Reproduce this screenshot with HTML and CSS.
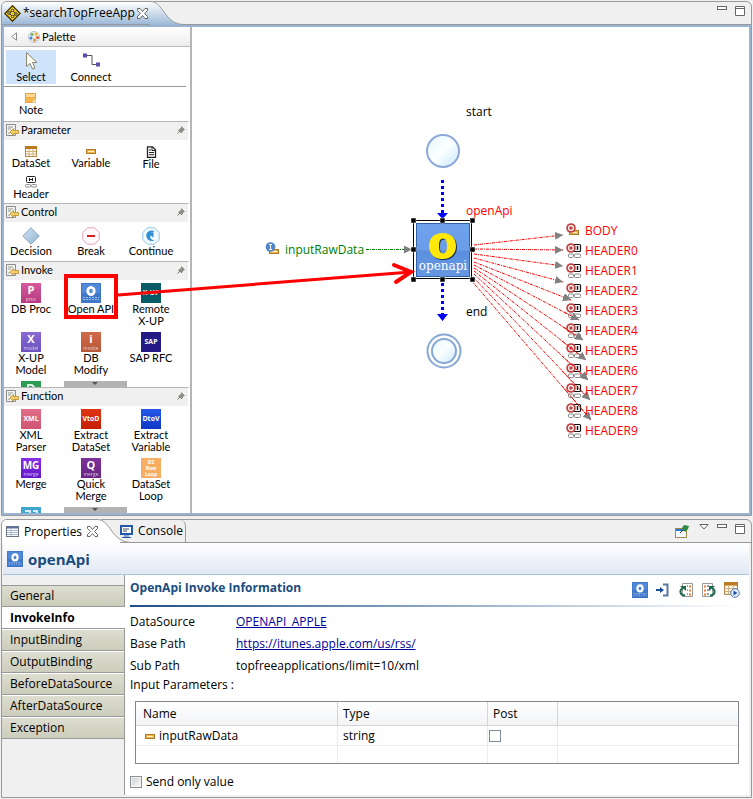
FILE: index.html
```html
<!DOCTYPE html>
<html lang="en">
<head>
<meta charset="utf-8">
<title>searchTopFreeApp</title>
<link rel="stylesheet" href="styles.css">
</head>
<body>
<svg class="defs" aria-hidden="true">
  <defs>
    <linearGradient id="gBlue" x1="0" y1="0" x2="0" y2="1"><stop offset="0" stop-color="#6fa3ee"/><stop offset=".5" stop-color="#6a9ce8"/><stop offset=".52" stop-color="#5b8fde"/><stop offset="1" stop-color="#6697e2"/></linearGradient>
    <linearGradient id="gCircle" x1="0" y1="0" x2="1" y2="1"><stop offset="0" stop-color="#e6f7fd"/><stop offset=".5" stop-color="#fbffff"/><stop offset="1" stop-color="#c9e6fb"/></linearGradient>
    <linearGradient id="gTab" x1="0" y1="0" x2="0" y2="1"><stop offset="0" stop-color="#fff"/><stop offset="1" stop-color="#9db9d8"/></linearGradient>
    <linearGradient id="gDiamond" x1="0" y1="0" x2="1" y2="1"><stop offset="0" stop-color="#d3e4f2"/><stop offset="1" stop-color="#8fb3d3"/></linearGradient>
    <marker id="head" viewBox="0 0 8 8" markerWidth="8" markerHeight="8" refX="8" refY="4" orient="auto" markerUnits="userSpaceOnUse"><path d="M0 0L8 4L0 8z" fill="#808080"/></marker>
    <symbol id="i-api" viewBox="0 0 20 20"><rect width="20" height="20" fill="#3f78c8"/><rect x="1" y="1" width="18" height="9" fill="#4f89d8"/><ellipse cx="10" cy="8" rx="3.200" ry="3.700" fill="none" stroke="#fff" stroke-width="2.800"/><path d="M2 14.500h16M2 16.500h16" stroke="#9fc0ee" stroke-dasharray="2 1"/></symbol>
    <symbol id="i-drawer" viewBox="0 0 13 12"><path d="M.5 .5h9v11h-9z" fill="#f3f3ee" stroke="#8c8c8c"/><path d="M2 3h5M2 5h3M2 9h2" stroke="#999"/><path d="M4 8l3.500-3.500v2h5v3h-5v2z" fill="#f6cf68" stroke="#b98a24" stroke-width=".8"/></symbol>
    <symbol id="i-pin" viewBox="0 0 8 8"><path d="M4.500 .5l3 3-1 .5-1.500 2-.5 1-3-3 1-.5 2-1.500z" fill="#8d8d85" stroke="#77776f" stroke-width=".6"/><path d="M3 5L.5 7.500" stroke="#777"/></symbol>
    <symbol id="i-close" viewBox="0 0 11 11"><path d="M.5 .5h2.500l2.500 3 2.500-3h2.500v2l-3 3 3 3v2h-2.500l-2.500-3-2.500 3h-2.500v-2l3-3-3-3z" fill="#fff" stroke="#555" stroke-width=".9"/></symbol>
    <symbol id="i-var" viewBox="0 0 10 5"><rect x=".5" y=".5" width="9" height="4" fill="#e9b44e" stroke="#b07a22"/><path d="M2 2.500h6" stroke="#fff1c4"/></symbol>
    <symbol id="i-grid" viewBox="0 0 12 11"><rect x=".5" y=".5" width="11" height="10" fill="#fffdf3" stroke="#b08a4c"/><rect x="0" y="0" width="12" height="3" fill="#bb7a1e"/><path d="M1 5.500h10M1 8h10M4 3v7M8 3v7" stroke="#cdb27e"/></symbol>
    <symbol id="i-hdr" viewBox="0 0 12 12"><rect x="1.500" y=".5" width="9" height="6" rx="1" fill="#fff" stroke="#222"/><path d="M4.500 2v3M7.500 2v3M4 3.500h4" stroke="#222"/><rect x=".5" y="8.500" width="5" height="2.500" rx="1" fill="#fff" stroke="#888"/><rect x="6.500" y="8.500" width="5" height="2.500" rx="1" fill="#fff" stroke="#888"/></symbol>
    <symbol id="i-target" viewBox="0 0 10 10"><circle cx="5" cy="5" r="4.800" fill="#bf4444"/><circle cx="5" cy="5" r="2.400" fill="none" stroke="#fff" stroke-width="1.200"/></symbol>
    <symbol id="i-outhdr" viewBox="0 0 16 16"><rect x="7.500" y="1.500" width="7" height="7" rx="1" fill="#fff" stroke="#111" stroke-width="1.200"/><path d="M11.500 3v4" stroke="#111" stroke-width="1.500"/><rect x="2.500" y="11" width="5" height="3.500" rx="1" fill="#fff" stroke="#888"/><rect x="8.500" y="11" width="6" height="3.500" rx="1" fill="#fff" stroke="#888"/><use href="#i-target" width="10" height="10" x="0" y="0"/></symbol>
  </defs>
</svg>

<main class="workbench">
<section class="pane editor">
  <header class="tabbar">
    <div class="tab tab-editor">
      <svg width="17" height="17" viewBox="0 0 17 17"><path d="M8.500 .8l7.700 7.700-7.700 7.700L.8 8.500z" fill="#ffd21f" stroke="#3d3000" stroke-width="1.300"/><path d="M5 8l3.500-2.500L12 9l-3.500 2.500z" fill="none" stroke="#222"/><g fill="#ffe98a" stroke="#222" stroke-width=".9"><circle cx="5" cy="8" r="1.300"/><circle cx="8.500" cy="5.500" r="1.300"/><circle cx="12" cy="9" r="1.300"/><circle cx="8.500" cy="11.500" r="1.300"/></g></svg>
      <span>*searchTopFreeApp</span>
      <svg width="11" height="11"><use href="#i-close"/></svg>
    </div>
    <svg class="swoop" width="34" height="24" viewBox="0 0 34 24"><path d="M0 0C14 0 14 23.500 34 23.500L34 24H0z" fill="url(#gTab)"/><path d="M0 .5C14 .5 14 23.500 34 23.500" fill="none" stroke="#999"/></svg>
    <div class="wincontrols">
      <svg width="10" height="4"><rect x=".5" y=".5" width="9" height="3" fill="#fff" stroke="#666"/></svg>
      <svg width="10" height="10"><path d="M.5 .5h9v9h-9zM0 2.500h10" fill="#fff" stroke="#666"/></svg>
    </div>
  </header>

  <div class="editor-body">
    <aside class="palette">
      <h2 class="palette-title">
        <svg width="6" height="9" viewBox="0 0 6 9"><path d="M5.500 .8v7.400L.8 4.500z" fill="#fff" stroke="#888"/></svg>
        <svg width="12" height="12" viewBox="0 0 12 12"><circle cx="6" cy="6" r="5.500" fill="#e8eef5" stroke="#b9c3cf"/><circle cx="4" cy="3.500" r="1.500" fill="#6bb34a"/><circle cx="8" cy="3" r="1.500" fill="#f2b52b"/><circle cx="9.500" cy="6.500" r="1.500" fill="#e4572e"/><circle cx="3" cy="7" r="1.500" fill="#3b82d0"/><circle cx="6.500" cy="9" r="1.600" fill="#f0912c"/></svg>
        Palette
      </h2>
      <div class="tools tools-main">
        <button class="tool selected"><svg width="20" height="20" viewBox="0 0 20 20"><path d="M5.500 1.500v14l3.500-3 2.500 5.500 2.500-1-2.500-5.500h4.500z" fill="#fffdf0" stroke="#8a8570"/></svg><span>Select</span></button>
        <button class="tool"><svg width="20" height="20" viewBox="0 0 20 20"><path d="M4 4.500h7v9h6" fill="none" stroke="#555"/><path d="M2 2.500h4v4H2zM15 11.500h4v4h-4z" fill="#5b4fb0"/></svg><span>Connect</span></button>
      </div>
      <div class="tools tools-note">
        <button class="tool"><svg width="12" height="11" viewBox="0 0 12 11"><path d="M.5 .5h10v9h-10z" fill="#f3b64f" stroke="#e0a24a"/><path d="M1 1h9v3H1z" fill="#fbd894"/><path d="M7 9.500l3.500-3.500v3.500z" fill="#fff0cd"/></svg><span>Note</span></button>
      </div>

      <h3 class="drawer"><svg width="13" height="12"><use href="#i-drawer"/></svg>Parameter<svg class="pin" width="8" height="8"><use href="#i-pin"/></svg></h3>
      <div class="tools tools-param">
        <button class="tool"><svg width="12" height="11"><use href="#i-grid"/></svg><span>DataSet</span></button>
        <button class="tool"><svg width="10" height="11"><use href="#i-var"/></svg><span>Variable</span></button>
        <button class="tool"><svg width="11" height="12" viewBox="0 0 11 12"><path d="M1.500 .8h5l3 3v7.500h-8z" fill="#fff" stroke="#222" stroke-width="1.300"/><path d="M3 4h2M3 6.500h5M3 8.700h5M6 1v3.500h3.500" stroke="#222" fill="none"/></svg><span>File</span></button>
        <button class="tool"><svg width="12" height="12"><use href="#i-hdr"/></svg><span>Header</span></button>
      </div>

      <h3 class="drawer"><svg width="13" height="12"><use href="#i-drawer"/></svg>Control<svg class="pin" width="8" height="8"><use href="#i-pin"/></svg></h3>
      <div class="tools tools-control">
        <button class="tool"><svg width="18" height="18" viewBox="0 0 19 19"><path d="M9.500 .8l8.700 8.700-8.700 8.700L.8 9.500z" fill="url(#gDiamond)" stroke="#83a0b9"/></svg><span>Decision</span></button>
        <button class="tool"><svg width="18" height="18" viewBox="0 0 18 18"><path d="M5.500 .8h7l4.700 4.700v7l-4.700 4.700h-7L.8 12.500v-7z" fill="#fffafa" stroke="#e2a0b8"/><path d="M5 9h8" stroke="#d91c1c" stroke-width="2"/></svg><span>Break</span></button>
        <button class="tool"><svg width="18" height="18" viewBox="0 0 18 18"><path d="M5.500 .8h7l4.700 4.700v7l-4.700 4.700h-7L.8 12.500v-7z" fill="#f4fbff" stroke="#90c4e8"/><path d="M13 4C7 2 3.500 5.500 4.500 10c1 3.500 4.500 5 8 3.500C9 13 7.500 11 8.500 8.500l3 2V5L7 6.500z" fill="#2d8ed6"/></svg><span>Continue</span></button>
      </div>

      <h3 class="drawer"><svg width="13" height="12"><use href="#i-drawer"/></svg>Invoke<svg class="pin" width="8" height="8"><use href="#i-pin"/></svg></h3>
      <div class="tools tools-invoke">
        <button class="tool"><i class="tile pink"><b>P</b><small>proc</small></i><span>DB Proc</span></button>
        <button class="tool"><svg width="20" height="20"><use href="#i-api"/></svg><span>Open API</span></button>
        <button class="tool"><i class="tile teal"><em>X-UP</em></i><span>Remote X-UP</span></button>
        <button class="tool"><i class="tile violet"><b>X</b><small>model</small></i><span>X-UP Model</span></button>
        <button class="tool"><i class="tile rust"><b>i</b><small>invoke</small></i><span>DB<br>Modify</span></button>
        <button class="tool"><i class="tile navy"><em>SAP</em></i><span>SAP RFC</span></button>
        <button class="tool" aria-label="More"><svg class="tile green" viewBox="0 0 20 20"><path d="M7 7V4h4l2 2v4" fill="none" stroke="#d8f3df" stroke-width="2"/></svg></button>
        <button class="scroller" aria-label="Scroll down"></button>
      </div>

      <h3 class="drawer"><svg width="13" height="12"><use href="#i-drawer"/></svg>Function<svg class="pin" width="8" height="8"><use href="#i-pin"/></svg></h3>
      <div class="tools tools-function">
        <button class="tool"><i class="tile rose"><em>XML</em></i><span>XML Parser</span></button>
        <button class="tool"><i class="tile red"><em>VtoD</em></i><span>Extract DataSet</span></button>
        <button class="tool"><i class="tile royal"><em>DtoV</em></i><span>Extract Variable</span></button>
        <button class="tool"><i class="tile purple"><b class="mg">MG</b><small>merge</small></i><span>Merge</span></button>
        <button class="tool"><i class="tile plum"><b>Q</b><small>merge</small></i><span>Quick Merge</span></button>
        <button class="tool"><i class="tile orange"><em class="stack">DS<br>Row<br>Loop</em></i><span>DataSet Loop</span></button>
        <button class="tool" aria-label="More"><svg class="tile cyan" viewBox="0 0 20 20"><path d="M4 4h5v3M12 4h4v3" fill="none" stroke="#d8f0fa" stroke-width="2"/></svg></button>
        <button class="scroller" aria-label="Scroll down"></button>
      </div>
    </aside>

    <div class="canvas">
      <svg class="diagram" width="557" height="486" viewBox="192 27 557 486">
        <text x="466" y="116">start</text>
        <circle cx="443" cy="151" r="16" fill="url(#gCircle)" stroke="#8ea8da" stroke-width="2"/>
        <path d="M442.500 180v33M442.500 283v32" stroke="#00f" stroke-width="3" stroke-dasharray="3 3"/>
        <path d="M437 213h11l-5.500 6zM437 314h11l-5.500 7z" fill="#00f"/>
        <g fill="none" stroke="#f00" stroke-dasharray="3 1 1 1">
          <path d="M474 245L563 235" marker-end="url(#head)"/>
          <path d="M474 249L563 250" marker-end="url(#head)"/>
          <path d="M474 254L563 266" marker-end="url(#head)"/>
          <path d="M474 258L563 282" marker-end="url(#head)"/>
          <path d="M474 262L571 300" marker-end="url(#head)"/>
          <path d="M474 265L579 320" marker-end="url(#head)"/>
          <path d="M474 268L583 340" marker-end="url(#head)"/>
          <path d="M474 271L586 360" marker-end="url(#head)"/>
          <path d="M474 274L588 380" marker-end="url(#head)"/>
          <path d="M473 277L590 400" marker-end="url(#head)"/>
          <path d="M471 280L591 420" marker-end="url(#head)"/>
        </g>
        <path d="M366 249.500H412" stroke="#008000" stroke-dasharray="3 1 1 1" marker-end="url(#head)"/>
        <text x="466" y="215" class="out">openApi</text>
        <rect x="416.500" y="223.500" width="53" height="53" fill="url(#gBlue)" stroke="#2f62a8"/>
        <path class="node-o" fill-rule="evenodd" d="M442.500 233c8 0 13.500 5 13.500 13s-5.500 13-13.500 13-13.500-5-13.500-13 5.500-13 13.500-13zM443 238.500c-3 0-4 3-4 7.500s1 7.500 4 7.500 4-3 4-7.500-1-7.500-4-7.500z"/>
        <text x="443" y="270" class="node-name">openapi</text>
        <path d="M413.500 220.500h58v58h-58z" fill="none" stroke="#000"/>
        <path d="M411 218h5v5h-5zM440 218h5v5h-5zM470 218h5v5h-5zM411 247h5v5h-5zM470 247h5v5h-5zM411 277h5v5h-5zM440 277h5v5h-5zM470 277h5v5h-5z" stroke="#fff" stroke-width=".5"/>
        <text x="466" y="316">end</text>
        <circle cx="444" cy="351" r="16.500" fill="#fff" stroke="#86a8d4" stroke-width="2"/>
        <circle cx="444" cy="351" r="12" fill="url(#gCircle)" stroke="#86a8d4" stroke-width="2"/>
        <use href="#i-var" x="269" y="249" width="10" height="5"/>
        <circle cx="270.500" cy="247" r="4.800" fill="#4f86cf"/><path d="M270.500 244.500v5M269 244.500h3M269 249.500h3" stroke="#fff"/>
        <text x="285" y="254" class="in">inputRawData</text>
        <use href="#i-var" x="569" y="230" width="10" height="5"/><use href="#i-target" x="566" y="223" width="10" height="10"/>
        <g>
          <use href="#i-outhdr" x="566" y="243" width="16" height="16"/><use href="#i-outhdr" x="566" y="263" width="16" height="16"/><use href="#i-outhdr" x="566" y="283" width="16" height="16"/><use href="#i-outhdr" x="566" y="303" width="16" height="16"/><use href="#i-outhdr" x="566" y="323" width="16" height="16"/><use href="#i-outhdr" x="566" y="343" width="16" height="16"/><use href="#i-outhdr" x="566" y="363" width="16" height="16"/><use href="#i-outhdr" x="566" y="383" width="16" height="16"/><use href="#i-outhdr" x="566" y="403" width="16" height="16"/><use href="#i-outhdr" x="566" y="423" width="16" height="16"/>
        </g>
        <g fill="none" stroke="#f00" stroke-dasharray="3 1 1 1">
          <path d="M563 297L571 300" marker-end="url(#head)"/>
          <path d="M564 312L579 320" marker-end="url(#head)"/>
          <path d="M563 327L583 340" marker-end="url(#head)"/>
          <path d="M562 341L586 360" marker-end="url(#head)"/>
          <path d="M562 356L588 380" marker-end="url(#head)"/>
          <path d="M562 371L590 400" marker-end="url(#head)"/>
          <path d="M562 386L591 420" marker-end="url(#head)"/>
        </g>
        <g class="out">
          <text x="585" y="235">BODY</text><text x="585" y="255">HEADER0</text><text x="585" y="275">HEADER1</text><text x="585" y="295">HEADER2</text><text x="585" y="315">HEADER3</text><text x="585" y="335">HEADER4</text><text x="585" y="355">HEADER5</text><text x="585" y="375">HEADER6</text><text x="585" y="395">HEADER7</text><text x="585" y="415">HEADER8</text><text x="585" y="435">HEADER9</text>
        </g>
      </svg>
    </div>

    <svg class="callout" width="745" height="486" viewBox="4 27 745 486" fill="none" stroke="#f00" stroke-width="4"><rect x="66" y="276" width="50" height="41"/><path d="M118 295L411 272" stroke-width="3"/><path d="M394 265L411 272L396 282" stroke-linecap="round"/></svg>
  </div>
</section>

<section class="pane props">
  <header class="tabbar">
    <div class="tab tab-props">
      <svg width="13" height="11" viewBox="0 0 13 11"><rect x=".5" y=".5" width="12" height="10" fill="#fff" stroke="#6b7487"/><path d="M1 1h11v1.500H1z" fill="#56719d"/><path d="M1 4.500h11M1 6.500h11M1 8.500h11M5 2v8" stroke="#a9b5c8"/></svg>
      <span>Properties</span>
      <svg width="11" height="11"><use href="#i-close"/></svg>
    </div>
    <svg class="swoop" width="32" height="24" viewBox="0 0 32 24"><path d="M0 0C12 0 14 23.500 32 23.500L32 24H0z" fill="#fff"/><path d="M0 .5C12 .5 14 23.500 32 23.500" fill="none" stroke="#999"/></svg>
    <div class="tab tab-console">
      <svg width="13" height="13" viewBox="0 0 13 13"><rect x="1" y="1" width="11" height="8" fill="#fff" stroke="#2459a8" stroke-width="2"/><path d="M3 4h6M3 6h4" stroke="#456"/><path d="M4 11h5M2 12.500h9" stroke="#2459a8"/></svg>
      <span>Console</span>
    </div>
    <div class="wincontrols">
      <svg class="pinview" width="15" height="14" viewBox="0 0 15 14"><rect x=".5" y="4.500" width="11" height="9" fill="#f4faff" stroke="#a08a4a"/><path d="M1 5h10v2H1z" fill="#2d79c6"/><path d="M9 1l5 1-1 3-3 3-3-4z" fill="#2f8a46"/><path d="M8 6L5 9" stroke="#333"/></svg>
      <svg width="10" height="6"><path d="M.8 .5h8.400L5 5z" fill="#fff" stroke="#666"/></svg>
      <svg width="10" height="4"><rect x=".5" y=".5" width="9" height="3" fill="#fff" stroke="#666"/></svg>
      <svg width="10" height="10"><path d="M.5 .5h9v9h-9zM0 2.500h10" fill="#fff" stroke="#666"/></svg>
    </div>
  </header>
  <h1 class="props-title"><svg width="16" height="16"><use href="#i-api"/></svg>openApi</h1>
  <div class="props-body">
    <nav class="sidetabs">
      <button>General</button>
      <button class="active">InvokeInfo</button>
      <button>InputBinding</button>
      <button>OutputBinding</button>
      <button>BeforeDataSource</button>
      <button>AfterDataSource</button>
      <button>Exception</button>
    </nav>
    <div class="details">
      <div class="details-head">
        <h2>OpenApi Invoke Information</h2>
        <div class="actions">
          <button aria-label="Open API"><svg width="16" height="16"><use href="#i-api"/></svg></button>
          <button aria-label="Go to"><svg width="16" height="16" viewBox="0 0 16 16"><path d="M8 2.500h4.500v11H8" fill="none" stroke="#58799f" stroke-width="2"/><path d="M1 8h5" stroke="#174e94" stroke-width="2"/><path d="M5 5L9 8l-4 3z" fill="#174e94"/></svg></button>
          <button aria-label="Import"><svg width="16" height="16" viewBox="0 0 16 16"><path d="M4.500 1.500h10v13h-10z" fill="#fff" stroke="#999"/><path d="M9 4h1M9 8h1M9 12h1" stroke="#345"/><path d="M11 4.500h2M11 8.500h2M11 12.500h2" stroke="#f08030" stroke-width="2"/><path d="M7 13.500C2 13 1 9 4.500 6" fill="none" stroke="#1d6b4a" stroke-width="2"/><path d="M2 4h6v5z" fill="#1d6b4a"/></svg></button>
          <button aria-label="Export"><svg width="16" height="16" viewBox="0 0 16 16"><path d="M1.500 1.500h10v13h-10z" fill="#fff" stroke="#999"/><path d="M6 4h2M6 8h2M6 12h2" stroke="#345"/><path d="M3 4.500h2M3 8.500h2M3 12.500h2" stroke="#f08030" stroke-width="2"/><path d="M9 13.500C14 13 15 9 11.500 6" fill="none" stroke="#1d6b4a" stroke-width="2"/><path d="M14 4H8v5z" fill="#1d6b4a"/></svg></button>
          <button aria-label="Run table"><svg width="16" height="16" viewBox="0 0 16 16"><use href="#i-grid" x="0" y="0" width="14" height="13"/><circle cx="11" cy="11" r="4.300" fill="#e7f0fc" stroke="#5578b5"/><path d="M9.500 8.500l4 2.500-4 2.500z" fill="#1d4fa5"/></svg></button>
        </div>
      </div>
      <dl class="fields">
        <dt>DataSource</dt><dd><a href="#">OPENAPI_APPLE</a></dd>
        <dt>Base Path</dt><dd><a href="#">https://itunes.apple.com/us/rss/</a></dd>
        <dt>Sub Path</dt><dd>topfreeapplications/limit=10/xml</dd>
      </dl>
      <p class="params-label" id="params">Input Parameters :</p>
      <table class="params" aria-labelledby="params">
        <thead><tr><th class="c-name">Name</th><th class="c-type">Type</th><th class="c-post">Post</th><th></th></tr></thead>
        <tbody>
          <tr><td><svg width="10" height="5"><use href="#i-var"/></svg>inputRawData</td><td>string</td><td><input type="checkbox" aria-label="Post"></td><td></td></tr>
          <tr><td></td><td></td><td></td><td></td></tr>
        </tbody>
      </table>
      <label class="send"><input type="checkbox">Send only value</label>
    </div>
  </div>
</section>
</main>
</body>
</html>
```
FILE: styles.css
```css
* { box-sizing: border-box; }
body {
  margin: 0;
  background: #f0f0f0;
  color: #000;
  font: 12px/14px "Open Sans", "Noto Sans", sans-serif;
}
h1, h2, h3, p, dl, dd { margin: 0; font-weight: normal; font-size: 12px; }
svg { display: block; flex: none; }
button { border: 0; padding: 0; margin: 0; background: none; font: inherit; color: inherit; }
.defs { position: absolute; width: 0; height: 0; }

.workbench {
  display: flex;
  flex-direction: column;
  gap: 3px;
  min-height: 100vh;
  padding: 1px;
}
.pane { border: 1px solid #999; border-radius: 6px 6px 0 0; background: #f0f0f0; }

.tabbar { display: flex; height: 23px; }
.tab { display: flex; align-items: center; gap: 6px; }
.tab-editor {
  gap: 2px;
  padding: 0 2px;
  background: linear-gradient(#fff, #9db9d8);
  border-radius: 5px 0 0 0;
}
.swoop { margin-top: -1px; }
.tab-props { padding-left: 4px; background: #fff; border-radius: 5px 0 0 0; gap: 5px; }
.tab-console {
  gap: 5px; margin-left: -10px; padding-right: 2px;
  border-right: 1px solid #999; border-radius: 0 6px 0 0;
}
.wincontrols { display: flex; gap: 8px; margin-left: auto; padding: 4px 6px 0 0; align-items: flex-start; }
.pinview { margin-right: 1px; }

.editor-body {
  position: relative;
  display: flex;
  border: 2px solid #99b4d1;
  background: #fff;
}
.editor .tabbar { border-bottom: 1px solid #999; }

.palette {
  width: 188px; flex: none; border-right: 2px solid #b5b5b5; background: #fff;
  font: 11px/12px Lato, "Open Sans", sans-serif;
}
.palette-title {
  display: flex; align-items: center; gap: 11px; height: 20px; padding-left: 7px;
  font-size: 11px;
  background: linear-gradient(#fff, #ececec); border-bottom: 1px solid #bbb;
}
.palette-title svg + svg { margin-right: -9px; }
.drawer {
  display: flex; align-items: center; gap: 2px; height: 19px; padding: 0 3px 2px 2px;
  font-size: 11px;
  background: #f0f0f0; border-top: 1px solid #b5b5b5; border-right: 2px solid #fff;
}
.drawer .pin { margin-left: auto; }
.tools {
  position: relative;
  display: grid;
  grid-template-columns: repeat(3, 50px);
  column-gap: 10px;
  align-content: start;
  padding-left: 2px;
}
.tool { display: flex; flex-direction: column; align-items: center; }
.tool.selected { background: #cfe3fa; }
.tools-main { padding-top: 3px; padding-bottom: 2px; margin-right: 4px; border-bottom: 1px solid #999; }
.tools-main .tool { height: 34px; padding-top: 1px; }
.tools-note { height: 34px; padding-top: 6px; }
.tools-param { height: 63px; padding-top: 6px; grid-auto-rows: 30px; }
.tools-control { height: 39px; padding-top: 5px; }
.tools-invoke { height: 107px; padding-top: 3px; grid-auto-rows: 49px; overflow: hidden; }
.tools-function { height: 107px; padding-top: 3px; grid-auto-rows: 49px; overflow: hidden; }
.tool span { text-align: center; }

.scroller {
  position: absolute; left: 60px; bottom: 0; width: 63px; height: 6px; background: #b3b3b3;
}
.scroller::after {
  content: ""; position: absolute; left: 28px; top: 1px;
  border: 3px solid transparent; border-top-color: #555; border-bottom: 0;
}

.tile {
  display: flex; flex-direction: column; align-items: center; justify-content: center;
  width: 20px; height: 20px; flex: none; color: #fff; font-family: "Open Sans", sans-serif; font-style: normal;
}
.tile b { font-size: 11px; line-height: 12px; }
.tile .mg { font-size: 10px; }
.tile small { font-size: 5px; line-height: 7px; opacity: .7; }
.tile em { font-style: normal; font-weight: bold; font-size: 7px; line-height: 10px; }
.tile .stack { font-size: 5px; line-height: 6px; }
.pink { background: linear-gradient(#d75a9e, #b53a80); }
.teal { background: #065b66; }
.violet { background: linear-gradient(#8a6ad6, #6b51bd); }
.rust { background: linear-gradient(#cf6a48, #b75637); }
.navy { background: #231a86; }
.green { background: #2b9e52; }
.rose { background: linear-gradient(#e26d87, #cf5571); }
.red { background: linear-gradient(#e03414, #c41d04); }
.royal { background: linear-gradient(#2558ea, #0e36c4); }
.purple { background: linear-gradient(#8530e8, #6417c7); }
.plum { background: linear-gradient(#7c329a, #682384); }
.orange { background: #f7ae62; }
.cyan { background: #3fa7cf; }

.canvas { flex: 1; min-width: 0; }
.diagram { font: 12px "Open Sans", "Noto Sans", sans-serif; }
.callout { position: absolute; left: 0; top: 0; pointer-events: none; }
.out { fill: #f00; }
.in { fill: #008000; }
.node-o { fill: #ffe80a; filter: drop-shadow(1px 1px 0 #1c3356); }
.node-name { font: 12px "DejaVu Serif", serif; fill: #fff; text-anchor: middle; }

.props { display: flex; flex-direction: column; flex: 1; }
.tab-console, .props .wincontrols { border-bottom: 1px solid #999; }
.props .wincontrols { flex: 1; justify-content: flex-end; }
.props-title {
  display: flex; align-items: center; gap: 5px; height: 32px; margin: 0 2px 0 1px; padding-left: 4px;
  font-size: 15px; line-height: 20px; font-weight: bold; color: #194c7f;
  background: linear-gradient(#fff, #e1e8f3); border-bottom: 1px solid #a9c4de;
}
.props-body { display: flex; flex: 1; padding-bottom: 2px; }
.sidetabs { width: 123px; flex: none; padding-top: 10px; border-right: 1px solid #999; }
.sidetabs button {
  display: block; width: 122px; height: 22px; padding: 0 7px 0 8px; text-align: left;
  background: linear-gradient(#ddddd0, #cdcdbd); border-top: 1px solid #fff; border-bottom: 1px solid #999;
}
.sidetabs button:first-child { border-top-color: #999; }
.sidetabs .active { width: 123px; background: #fff; font-weight: bold; }
.details { flex: 1; min-width: 0; padding: 0 9px 5px 5px; background: #fff; margin-right: 2px; }
.details-head {
  display: flex; justify-content: space-between; align-items: center; height: 32px; padding-bottom: 4px;
  border-bottom: 2px solid; border-image: linear-gradient(90deg, #1d4f88, #fff) 1;
}
.details-head h2 { font-weight: bold; color: #194c7f; }
.actions { display: flex; gap: 7px; padding-top: 4px; }
.fields { display: grid; grid-template-columns: 106px 1fr; padding-top: 4px; grid-auto-rows: 22px; align-items: center; }
a { color: #00009c; }
.params-label { line-height: 16px; }
.params {
  width: calc(100% - 6px); margin: 8px 0 0 5px; border: 1px solid #828790;
  border-collapse: separate; border-spacing: 0; table-layout: fixed; background: #fff;
}
.params th, .params td {
  height: 20px; padding: 0 5px; text-align: left; font-weight: normal;
  border-right: 1px solid #ececec; border-bottom: 1px solid #ececec;
}
.params th { height: 24px; background: linear-gradient(#fff, #f3f4f6); border-color: #d5d5d5; }
.params th:first-child, .params td:first-child { padding-left: 7px; }
.params th:last-child, .params td:last-child { border-right: 0; }
.params tr:last-child td { border-bottom: 0; height: 17px; }
.c-name { width: 202px; }
.c-type { width: 150px; }
.c-post { width: 70px; }
.params td svg { display: inline-block; margin: 0 4px 1px 2px; }
input[type="checkbox"] {
  appearance: none; width: 12px; height: 12px; margin: 0; display: block;
  border: 1px solid #7c8a9c; background: #fff;
}
.params td input { margin-left: -4px; }
.send { display: flex; align-items: center; gap: 4px; margin-top: 11px; }
.send input { border: 1px solid #8e8f8f; background: linear-gradient(135deg, #c6cacf, #fff); box-shadow: inset 0 0 0 1px #f4f4f4; }
```
